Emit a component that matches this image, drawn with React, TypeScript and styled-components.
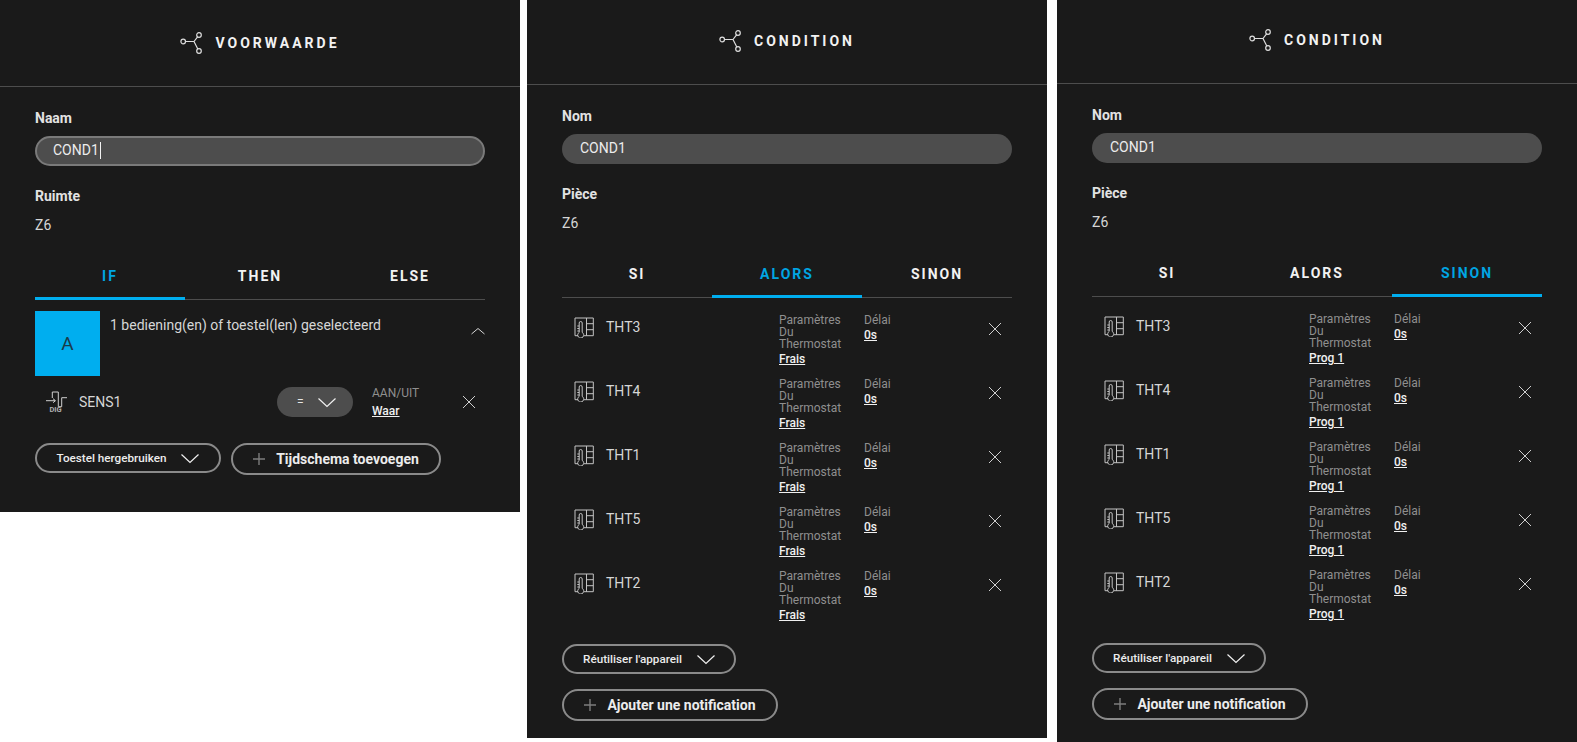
import styled, { createGlobalStyle } from "styled-components";

const GlobalStyle = createGlobalStyle`
  html, body {
    margin: 0;
    padding: 0;
    background: #fff;
    font-family: Roboto, "Liberation Sans", sans-serif;
  }
`;

const Page = styled.div`
  display: flex;
  align-items: flex-start;
  width: 1577px;
  height: 742px;
  overflow: hidden;
`;

const Panel = styled.section<{ $height: number; $gap: number }>`
  width: 520px;
  height: ${(p) => p.$height}px;
  margin-right: ${(p) => p.$gap}px;
  flex-shrink: 0;
  background: #1a1a1a;
  color: #e6e6e6;
`;

const Header = styled.header<{ $height: number; $lift: number }>`
  display: flex;
  align-items: center;
  justify-content: center;
  gap: 11px;
  height: ${(p) => p.$height}px;
  padding-bottom: ${(p) => p.$lift}px;
  box-sizing: border-box;
  border-bottom: 1px solid #4d4d4d;
`;

const Title = styled.h1`
  margin: 0;
  font-size: 14px;
  font-weight: 700;
  letter-spacing: 3px;
  color: #f2f2f2;
`;

const Body = styled.div`
  padding: 0 35px;
`;

const FieldLabel = styled.div`
  font-size: 14px;
  line-height: 16px;
  font-weight: 700;
  color: #e2e2e2;
`;

const NameLabel = styled(FieldLabel)`
  padding-top: 23px;
`;

const RoomLabel = styled(FieldLabel)`
  padding-top: 22px;
`;

const NameInput = styled.div<{ $focused?: boolean }>`
  display: flex;
  align-items: center;
  height: 30px;
  margin-top: 10px;
  padding-left: ${(p) => (p.$focused ? 16 : 18)}px;
  padding-bottom: 2px;
  box-sizing: border-box;
  border-radius: 15px;
  background: #4d4d4d;
  border: ${(p) => (p.$focused ? "2px solid #7a7a7a" : "none")};
  font-size: 14px;
  color: #ececec;
`;

const Caret = styled.span`
  display: inline-block;
  width: 1px;
  height: 17px;
  margin-left: 1px;
  background: #f2f2f2;
`;

const RoomValue = styled.div`
  margin-top: 13px;
  font-size: 14px;
  line-height: 16px;
  color: #d6d6d6;
`;

const Tabs = styled.div`
  display: grid;
  grid-template-columns: repeat(3, 1fr);
  margin-top: 21px;
  height: 45px;
  border-bottom: 1px solid #4d4d4d;
`;

const Tab = styled.div<{ $active?: boolean }>`
  display: flex;
  justify-content: center;
  padding-top: 14px;
  height: 46px;
  box-sizing: border-box;
  font-size: 14px;
  line-height: 16px;
  font-weight: 700;
  letter-spacing: 2px;
  color: ${(p) => (p.$active ? "#00a5e3" : "#f2f2f2")};
  border-bottom: 3px solid ${(p) => (p.$active ? "#00aeef" : "transparent")};
`;

const GroupHeader = styled.div`
  display: flex;
  align-items: flex-start;
  gap: 10px;
  margin-top: 11px;
`;

const GroupBadge = styled.div`
  display: flex;
  align-items: center;
  justify-content: center;
  width: 65px;
  height: 65px;
  background: #00aeef;
  color: #1a3a4a;
  font-size: 19px;
`;

const GroupText = styled.div`
  flex: 1;
  padding-top: 6px;
  font-size: 14px;
  line-height: 16px;
  color: #d6d6d6;
`;

const Collapse = styled.svg`
  margin: 16px 0 0;
  color: #d6d6d6;
`;

const SensorRow = styled.div`
  display: grid;
  grid-template-columns: 242px 95px 1fr 33px;
  align-items: center;
  height: 30px;
  margin-top: 10px;
`;

const DeviceCell = styled.div<{ $inset: number; $gap: number }>`
  display: flex;
  align-items: center;
  gap: ${(p) => p.$gap}px;
  padding-left: ${(p) => p.$inset}px;
  font-size: 14px;
  color: #d6d6d6;
`;

const Operator = styled.div`
  display: flex;
  align-items: center;
  justify-content: space-between;
  width: 76px;
  height: 30px;
  box-sizing: border-box;
  padding: 0 17px 0 20px;
  border-radius: 15px;
  background: #4d4d4d;
  font-size: 12px;
  color: #e6e6e6;
`;

const SmallLabel = styled.div`
  font-size: 12px;
  line-height: 12px;
  color: #8f8f8f;
`;

const SmallValue = styled.a`
  display: block;
  width: fit-content;
  font-size: 12px;
  line-height: 14px;
  font-weight: 500;
  color: #f0f0f0;
  text-decoration: underline;
`;

const SensorValue = styled.div`
  ${SmallLabel} {
    line-height: 14px;
    margin-bottom: 4px;
  }
`;

const Remove = styled.svg`
  justify-self: center;
  color: #cfcfcf;
`;

const Actions = styled.div<{ $column?: boolean; $top: number }>`
  display: flex;
  flex-direction: ${(p) => (p.$column ? "column" : "row")};
  align-items: flex-start;
  gap: ${(p) => (p.$column ? 15 : 10)}px;
  margin-top: ${(p) => p.$top}px;
`;

const PillButton = styled.button<{ $big?: boolean; $w: number }>`
  display: flex;
  align-items: center;
  justify-content: center;
  width: ${(p) => p.$w}px;
  height: ${(p) => (p.$big ? 32 : 30)}px;
  padding: 0;
  background: transparent;
  border: 2px solid #8a8a8a;
  border-radius: 16px;
  box-sizing: border-box;
  gap: ${(p) => (p.$big ? 11 : 15)}px;
  font-family: inherit;
  font-size: ${(p) => (p.$big ? 14 : 11.7)}px;
  font-weight: ${(p) => (p.$big ? 700 : 500)};
  color: #ececec;
`;

const Plus = styled.svg`
  color: #7d7d7d;
`;

const DeviceRow = styled.div`
  display: grid;
  grid-template-columns: 217px 85px 1fr 34px;
  height: 64px;
  padding-top: 16px;
  box-sizing: border-box;
`;

const DeviceName = styled(DeviceCell)`
  height: 26px;
`;

const CloseCell = styled.div`
  grid-column: 4;
  display: flex;
  justify-content: center;
  padding-top: 8px;
`;

const ValueLine = styled.div`
  margin-top: 2px;
`;

function NetworkIcon() {
  return (
    <svg width="24" height="24" viewBox="0 0 24 24" fill="none" stroke="#dedede" strokeWidth="1.2">
      <circle cx="3.2" cy="10.5" r="2.3" />
      <circle cx="19" cy="4" r="2.3" />
      <circle cx="19" cy="20" r="2.3" />
      <path d="M5.5 10.5H14M14 10.5L17.6 5.8M14 10.5L17.8 18" />
    </svg>
  );
}

function Chevron() {
  return (
    <svg width="18" height="11" viewBox="0 0 18 11" fill="none" stroke="#f0f0f0" strokeWidth="1.2">
      <path d="M0.5 1.5L9 9.5L17.5 1.5" />
    </svg>
  );
}

function CloseIcon() {
  return (
    <Remove width="14" height="14" viewBox="0 0 14 14" fill="none" stroke="currentColor" strokeWidth="1">
      <path d="M1 1L13 13M13 1L1 13" />
    </Remove>
  );
}

function SensorIcon() {
  return (
    <svg width="22" height="22" viewBox="0 0 22 22" fill="none" stroke="#cfcfcf" strokeWidth="1">
      <path d="M0 9.7H9M7 7.7L9.5 9.7L7 11.7" />
      <path d="M6.3 7V1H12.3V15.7H15.7V6.7H21" />
      <text x="3.5" y="21" fontFamily="Roboto" fontSize="7.5" fontWeight="700" fill="#b0b0b0" stroke="none">
        DIG
      </text>
    </svg>
  );
}

function ThermostatIcon() {
  return (
    <svg width="20" height="22" viewBox="0 -1 20 22" fill="none" stroke="#c4c4c4" strokeWidth="1">
      <path d="M4 18.7H1V1H19.3V18.7H10" />
      <path d="M12.5 1V18.7M12.5 6.7H19.3M12.5 12.7H19.3" />
      <path d="M5.2 6a1.5 1.5 0 0 1 3 0V15.4a3 3 0 1 1-3 0Z" />
      <path d="M3.3 9H5.2M3.3 11.5H5.2M3.3 14H5.2" />
    </svg>
  );
}

function PlusIcon() {
  return (
    <Plus width="12" height="12" viewBox="0 0 12 12" fill="none" stroke="currentColor" strokeWidth="1.4">
      <path d="M6 0V12M0 6H12" />
    </Plus>
  );
}

const devices = ["THT3", "THT4", "THT1", "THT5", "THT2"];

function ThermostatRows({ mode }: { mode: string }) {
  return (
    <div>
      {devices.map((name) => (
        <DeviceRow key={name}>
          <DeviceName $inset={12} $gap={12}>
            <ThermostatIcon />
            {name}
          </DeviceName>
          <div>
            <SmallLabel>
              Paramètres
              <br />
              Du
              <br />
              Thermostat
            </SmallLabel>
            <ValueLine>
              <SmallValue>{mode}</SmallValue>
            </ValueLine>
          </div>
          <div>
            <SmallLabel>Délai</SmallLabel>
            <ValueLine>
              <SmallValue>0s</SmallValue>
            </ValueLine>
          </div>
          <CloseCell>
            <CloseIcon />
          </CloseCell>
        </DeviceRow>
      ))}
    </div>
  );
}

function FrenchPanel(props: { active: string; mode: string; top: number; height: number; gap: number; lift: number }) {
  return (
    <Panel $height={props.height} $gap={props.gap}>
      <Header $height={props.top} $lift={props.lift}>
        <NetworkIcon />
        <Title>CONDITION</Title>
      </Header>
      <Body>
        <NameLabel>Nom</NameLabel>
        <NameInput>COND1</NameInput>
        <RoomLabel>Pièce</RoomLabel>
        <RoomValue>Z6</RoomValue>
        <Tabs>
          {["SI", "ALORS", "SINON"].map((t) => (
            <Tab key={t} $active={t === props.active}>
              {t}
            </Tab>
          ))}
        </Tabs>
        <ThermostatRows mode={props.mode} />
        <Actions $column $top={26}>
          <PillButton $w={174}>
            Réutiliser l'appareil
            <Chevron />
          </PillButton>
          <PillButton $big $w={216}>
            <PlusIcon />
            Ajouter une notification
          </PillButton>
        </Actions>
      </Body>
    </Panel>
  );
}

export default function App() {
  return (
    <Page>
      <GlobalStyle />
      <Panel $height={512} $gap={7}>
        <Header $height={87} $lift={0}>
          <NetworkIcon />
          <Title>VOORWAARDE</Title>
        </Header>
        <Body>
          <NameLabel>Naam</NameLabel>
          <NameInput $focused>
            COND1
            <Caret />
          </NameInput>
          <RoomLabel>Ruimte</RoomLabel>
          <RoomValue>Z6</RoomValue>
          <Tabs>
            {["IF", "THEN", "ELSE"].map((t) => (
              <Tab key={t} $active={t === "IF"}>
                {t}
              </Tab>
            ))}
          </Tabs>
          <GroupHeader>
            <GroupBadge>A</GroupBadge>
            <GroupText>1 bediening(en) of toestel(len) geselecteerd</GroupText>
            <Collapse width="14" height="8" viewBox="0 0 14 8" fill="none" stroke="currentColor" strokeWidth="1">
              <path d="M0.5 7L7 1.5L13.5 7" />
            </Collapse>
          </GroupHeader>
          <SensorRow>
            <DeviceCell $inset={11} $gap={11}>
              <SensorIcon />
              SENS1
            </DeviceCell>
            <Operator>
              =
              <Chevron />
            </Operator>
            <SensorValue>
              <SmallLabel>AAN/UIT</SmallLabel>
              <SmallValue>Waar</SmallValue>
            </SensorValue>
            <CloseIcon />
          </SensorRow>
          <Actions $top={27}>
            <PillButton $w={186}>
              Toestel hergebruiken
              <Chevron />
            </PillButton>
            <PillButton $big $w={210}>
              <PlusIcon />
              Tijdschema toevoegen
            </PillButton>
          </Actions>
        </Body>
      </Panel>
      <FrenchPanel active="ALORS" mode="Frais" top={85} height={738} gap={10} lift={3} />
      <FrenchPanel active="SINON" mode="Prog 1" top={84} height={742} gap={0} lift={3} />
    </Page>
  );
}
